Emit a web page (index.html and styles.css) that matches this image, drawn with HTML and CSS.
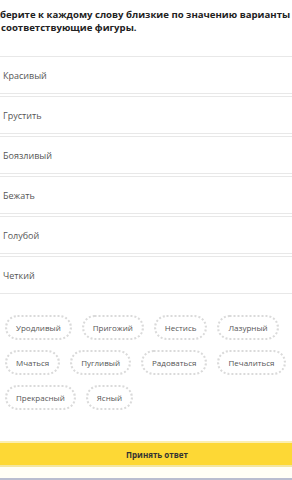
FILE: index.html
```html
<!DOCTYPE html>
<html lang="ru">
<head>
  <meta charset="UTF-8">
  <meta name="viewport" content="width=device-width, initial-scale=1.0">
  <title>Подберите синонимы</title>
  <link rel="stylesheet" href="styles.css">
</head>
<body>
  <div class="page">
    <p class="question">Подберите к каждому слову близкие по значению варианты и переместите<br>в соответствующие фигуры.</p>

    <div class="targets">
      <div class="target">Красивый</div>
      <div class="target">Грустить</div>
      <div class="target">Боязливый</div>
      <div class="target">Бежать</div>
      <div class="target">Голубой</div>
      <div class="target">Четкий</div>
    </div>

    <div class="chips">
      <span class="chip">Уродливый</span>
      <span class="chip">Пригожий</span>
      <span class="chip">Нестись</span>
      <span class="chip">Лазурный</span>
      <span class="chip">Мчаться</span>
      <span class="chip">Пугливый</span>
      <span class="chip">Радоваться</span>
      <span class="chip">Печалиться</span>
      <span class="chip">Прекрасный</span>
      <span class="chip">Ясный</span>
    </div>

    <div class="footer">
      <button type="button" class="submit">Принять ответ</button>
    </div>
  </div>
</body>
</html>
```

FILE: styles.css
```css
body {
  margin: 0;
  background-color: #fff;
  font-family: "Open Sans", "Liberation Sans", sans-serif;
  overflow: hidden;
  height: 480px;
}
.page {
  width: 326px;
  margin-left: -6px;
}
.question {
  margin: 0 0 0 -1.5px;
  padding: 8px 0 0 0;
  width: 400px;
  text-indent: -12px;
  font-size: 9.6px;
  line-height: 13px;
  font-weight: bold;
  color: #222;
}
.targets {
  margin-top: 22px;
  display: flex;
  flex-direction: column;
  gap: 2px;
}
.target {
  height: 36px;
  border: 1px solid #e8e8e8;
  padding-left: 8px;
  display: flex;
  align-items: center;
  font-size: 9px;
  color: #555;
}
.chips {
  margin-top: 21px;
  padding-left: 11px;
  display: flex;
  flex-wrap: wrap;
  gap: 10px 10px;
  width: 290px;
}
.chip {
  height: 25px;
  box-sizing: border-box;
  padding: 0 9px;
  border: 2px dotted #dadada;
  border-radius: 13px;
  display: flex;
  align-items: center;
  font-size: 8px;
  color: #555;
}
.footer {
  margin-top: 31px;
  border-top: 2px solid #fbefb0;
  background-color: #fffef6;
  height: 35px;
  border-bottom: 2px solid #b9bdd0;
}
.submit {
  display: block;
  width: 100%;
  height: 24px;
  border: none;
  border-bottom: 2px solid #f3e6a0;
  background-color: #fdd835;
  font-family: inherit;
  font-size: 8px;
  font-weight: bold;
  color: #333;
}
```
